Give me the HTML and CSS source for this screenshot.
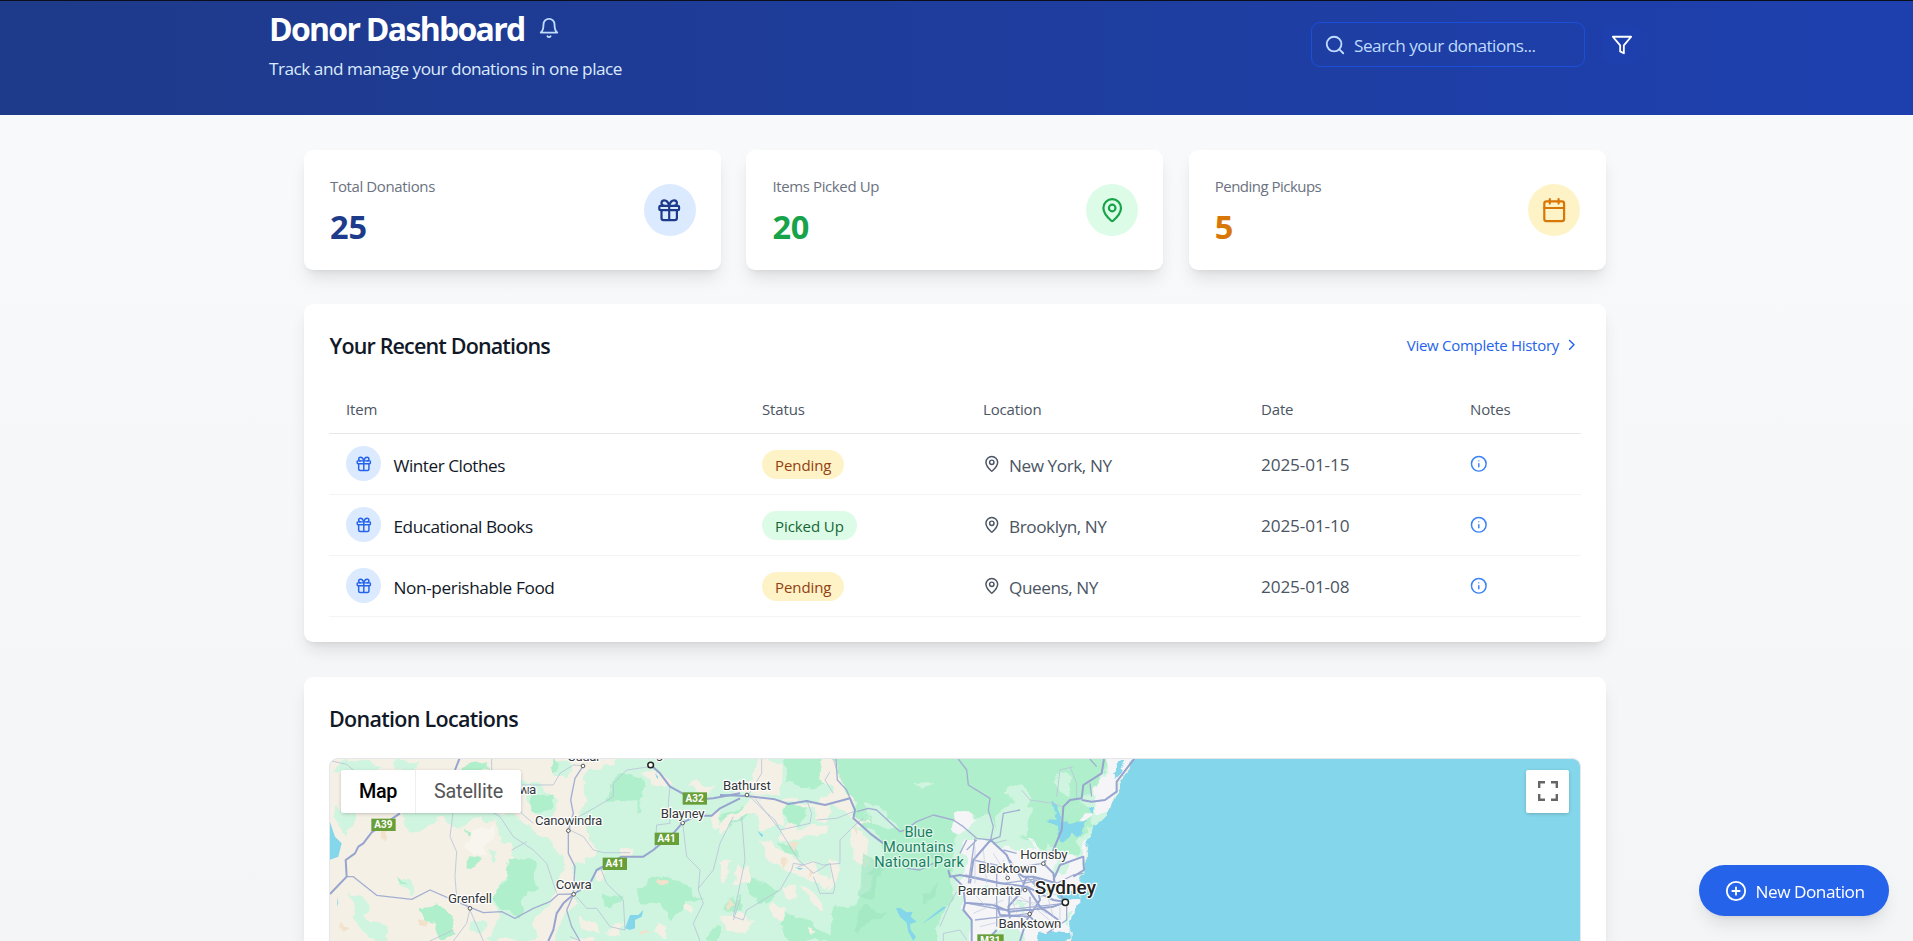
FILE: index.html
```html
<!DOCTYPE html>
<html lang="en">
<head>
<meta charset="utf-8">
<title>Donor Dashboard</title>
<link rel="stylesheet" href="styles.css">
</head>
<body>
<svg width="0" height="0" class="sprite" aria-hidden="true">
  <symbol id="gift" viewBox="0 0 24 24"><rect x="3" y="8" width="18" height="4" rx="1"/><path d="M12 8v13M19 12v7a2 2 0 0 1-2 2H7a2 2 0 0 1-2-2v-7M7.5 8a2.5 2.5 0 0 1 0-5A4.8 8 0 0 1 12 8a4.8 8 0 0 1 4.5-5 2.5 2.5 0 0 1 0 5"/></symbol>
  <symbol id="pin" viewBox="0 0 24 24"><path d="M20 10c0 4.993-5.539 10.193-7.399 11.799a1 1 0 0 1-1.202 0C9.539 20.193 4 14.993 4 10a8 8 0 0 1 16 0"/><circle cx="12" cy="10" r="3"/></symbol>
  <symbol id="info" viewBox="0 0 24 24"><circle cx="12" cy="12" r="10"/><path d="M12 16v-4M12 8h.01"/></symbol>
</svg>

<header class="header">
  <div class="header-inner">
    <div class="heading">
      <div class="title-row">
        <h1 class="title">Donor Dashboard</h1>
        <svg class="icon icon-md bell" viewBox="0 0 24 24"><path d="M6 8a6 6 0 0 1 12 0c0 7 3 9 3 9H3s3-2 3-9M10.3 21a1.94 1.94 0 0 0 3.4 0"/></svg>
      </div>
      <p class="subtitle">Track and manage your donations in one place</p>
    </div>
    <div class="tools">
      <div class="search">
        <svg class="icon icon-md" viewBox="0 0 24 24"><circle cx="11" cy="11" r="8"/><path d="m21 21-4.3-4.3"/></svg>
        <span class="search-text">Search your donations...</span>
      </div>
      <button class="filter"><svg class="icon icon-md" viewBox="0 0 24 24"><path d="M22 3H2l8 9.46V19l4 2v-8.54z"/></svg></button>
    </div>
  </div>
</header>

<main class="main">
  <section class="stats">
    <div class="card stat">
      <div><p class="stat-label">Total Donations</p><p class="stat-value blue">25</p></div>
      <div class="bubble bubble-blue"><svg class="icon icon-lg"><use href="#gift"/></svg></div>
    </div>
    <div class="card stat">
      <div><p class="stat-label">Items Picked Up</p><p class="stat-value green">20</p></div>
      <div class="bubble bubble-green"><svg class="icon icon-lg"><use href="#pin"/></svg></div>
    </div>
    <div class="card stat">
      <div><p class="stat-label tight">Pending Pickups</p><p class="stat-value amber">5</p></div>
      <div class="bubble bubble-amber"><svg class="icon icon-lg" viewBox="0 0 24 24"><path d="M8 2v4M16 2v4M3 10h18"/><rect x="3" y="4" width="18" height="18" rx="2"/></svg></div>
    </div>
  </section>

  <section class="card recent">
    <div class="recent-head">
      <h2 class="section-title recent-title">Your Recent Donations</h2>
      <a class="history"><span>View Complete History</span><svg class="icon icon-sm" viewBox="0 0 24 24"><path d="m9 18 6-6-6-6"/></svg></a>
    </div>
    <table class="table">
      <thead><tr><th class="c-item">Item</th><th class="c-status">Status</th><th class="c-loc">Location</th><th class="c-date">Date</th><th>Notes</th></tr></thead>
      <tbody>
        <tr>
          <td><div class="cell"><span class="dot"><svg class="icon icon-sm"><use href="#gift"/></svg></span><span class="name">Winter Clothes</span></div></td>
          <td><span class="badge pending">Pending</span></td>
          <td><div class="cell place"><svg class="icon icon-sm"><use href="#pin"/></svg><span>New York, NY</span></div></td>
          <td class="date">2025-01-15</td>
          <td><svg class="icon icon-sm note"><use href="#info"/></svg></td>
        </tr>
        <tr>
          <td><div class="cell"><span class="dot"><svg class="icon icon-sm"><use href="#gift"/></svg></span><span class="name">Educational Books</span></div></td>
          <td><span class="badge picked">Picked Up</span></td>
          <td><div class="cell place"><svg class="icon icon-sm"><use href="#pin"/></svg><span>Brooklyn, NY</span></div></td>
          <td class="date">2025-01-10</td>
          <td><svg class="icon icon-sm note"><use href="#info"/></svg></td>
        </tr>
        <tr>
          <td><div class="cell"><span class="dot"><svg class="icon icon-sm"><use href="#gift"/></svg></span><span class="name wide">Non-perishable Food</span></div></td>
          <td><span class="badge pending">Pending</span></td>
          <td><div class="cell place"><svg class="icon icon-sm"><use href="#pin"/></svg><span>Queens, NY</span></div></td>
          <td class="date">2025-01-08</td>
          <td><svg class="icon icon-sm note"><use href="#info"/></svg></td>
        </tr>
      </tbody>
    </table>
  </section>

  <section class="card locations">
    <h2 class="section-title">Donation Locations</h2>
    <div class="map">
      <svg class="map-canvas" viewBox="330 759 1250 182" preserveAspectRatio="none">
        <defs>
          <filter id="rough" x="0" y="0" width="1" height="1"><feTurbulence type="fractalNoise" baseFrequency=".06" numOctaves="3" seed="4"/><feDisplacementMap in="SourceGraphic" scale="14" xChannelSelector="R" yChannelSelector="G"/></filter>
        </defs>
        <rect x="330" y="758" width="1250" height="183" fill="#f5f0e5"/>
        <!-- western plains -->
        <g filter="url(#rough)">
        <g transform="translate(320 670) scale(.33333)">
          <rect x="-100" y="150" width="1500" height="800" fill="#f5f0e5"/>
          <g fill="#cff5e0">
            <path d="M810 300 880 290 905 250H1300V900H830L800 700 770 690 790 570 830 540 800 470 770 440 800 390 790 340Z"/>
            <path d="M520 430 600 440 640 480 700 520 740 600 690 700 640 760 650 813 500 813 540 740 520 690 560 600 590 560 540 500Z"/>
            <path d="M760 570 830 600 860 813H700L720 740 780 700Z"/>
            <path d="M250 430 330 410H520L580 480 520 450 480 440 420 480 360 440 300 490 270 480Z"/>
            <path d="M70 270 190 285 160 305H50Z"/><path d="M90 665 150 700 130 740 200 780 190 830 150 813 95 720Z"/>
            <path d="M600 330 660 340 720 400 700 450 660 440 620 400Z"/><path d="M230 270 300 280 280 300 225 300ZM60 400 100 440 80 500 40 440Z"/>
            <path d="M460 740 500 760 480 800 450 780ZM240 625 275 640 270 670 235 650ZM510 540 530 550 525 570 510 560ZM545 500 560 510 550 520ZM710 280 760 270 740 330 700 320Z"/>
          </g>
          <g fill="#f5f0e5"><path d="M1230 540 1270 560V760L1235 750 1210 700 1240 660 1205 620 1240 590ZM780 740 830 760 840 790 790 780ZM1120 330 1180 350 1160 370 1110 350ZM905 540 940 535 945 560 905 565ZM1090 690 1115 710 1105 740 1085 715ZM1000 760 1030 770 1040 800 1000 790ZM1175 440 1200 430 1210 460 1180 470ZM820 610 860 615 850 640 820 630ZM960 300 1040 310 1060 350 1000 340ZM890 755 915 760 900 800 860 790Z"/></g>
          <g fill="#b0efcb">
            <path d="M570 560 650 570 650 660 610 690 590 740 540 720 525 680 550 640Z"/><path d="M305 710 350 700 400 740 410 800 360 805 340 760 310 740Z"/>
            <path d="M900 310 970 330 960 390 870 395 880 340Z"/><path d="M635 365 700 365 700 420 650 430 625 400Z"/><path d="M440 565 478 570 465 600 440 595Z"/>
            <path d="M950 655 1000 620 1050 610 1100 650 1150 690 1100 690 1060 750 1020 700 960 690Z"/><path d="M420 290 500 270 500 300 460 320 430 310Z"/>
            <path d="M440 475 465 495 440 497ZM235 615 262 650 240 645ZM690 265 720 290 700 310ZM955 370 965 430 955 430ZM860 670 900 690 880 720 850 700ZM1180 770 1210 790 1190 810 1150 800Z"/>
          </g>
          <path fill="#f8f5ef" d="M460 480 520 460 520 510 495 520 495 560 450 560 440 530Z"/>
          <path fill="#f3e2cb" d="M175 485 200 480 200 500 178 500ZM300 740 320 745 315 770 300 765ZM1020 620 1045 625 1040 645 1020 640ZM60 765 85 770 75 790ZM960 775 990 785 965 795Z"/>
        </g>
        <!-- mountains and basin -->
        <g transform="translate(720 740) scale(.33333)">
          <path fill="#cff5e0" d="M0 0H1260L1200 130 1150 260 1105 330 1080 480 1040 640H0Z"/>
          <g fill="#b0efcb">
            <path d="M190 30H440L430 150 400 180 340 90 330 110 290 150 200 130ZM360 30H1160L1140 130 1080 180 1020 240 1000 330 900 290 860 310 820 270 800 230 760 220 700 250 700 330 690 420 700 470 650 560 660 640H320L340 500 420 440 460 390 490 330 480 290 410 230 400 180 380 150 350 90Z"/>
            <path d="M1020 240 1080 180 1110 200 1120 260 1070 300 1080 330 1010 370 990 320ZM195 205 250 190 270 230 230 260 195 250ZM60 400 110 410 170 450 150 500 100 470ZM200 520 290 560 340 600 200 600 180 550ZM0 230 60 190 100 210 40 260ZM20 480 70 470 60 520 20 510ZM180 300 230 320 240 350 190 340Z"/>
          </g>
          <g fill="#cff5e0"><path d="M430 190 500 220 540 270 480 260 440 230ZM820 230 870 180 930 200 920 280 860 310 820 280ZM850 150 900 130 940 170 900 200ZM580 130 650 130 600 150ZM340 430 400 430 420 400 470 410 400 500 350 500ZM1020 90 1060 120 1050 170 1000 130ZM1010 380 1080 360 1085 410 1040 420Z"/></g>
          <g fill="#f5f0e5">
            <path d="M120 50 190 60 180 160 120 170 40 160 100 110ZM310 50 350 60 380 150 400 180 400 230 330 190 320 240 290 240 280 200 200 190 180 260 120 270 100 210 60 230 0 290V250L60 200 100 170 300 190 340 140 300 120Z"/>
            <path d="M390 270 430 270 440 310 450 370 430 390 405 370 395 310ZM190 240 230 270 330 250 310 280 240 300 180 290ZM120 300 180 330 240 370 280 370 330 420 310 440 250 400 190 390 140 350ZM50 370 90 380 90 430 40 440ZM0 360 30 360 20 430 0 430ZM0 530 60 520 100 540 80 580 20 570ZM250 440 300 470 310 510 270 500ZM160 490 200 500 190 540 160 530ZM330 360 360 370 350 430 320 450ZM255 560 290 570 270 585ZM390 230 450 240 420 260ZM180 440 230 440 230 470 190 465Z"/>
          </g>
          <path fill="#f3e2cb" d="M210 300 240 310 225 340ZM20 480 45 485 30 510ZM180 360 210 370 190 390ZM400 260 415 265 405 290ZM260 380 280 385 270 405Z"/>
          <g fill="#9fe5bf" opacity=".6"><path d="M430 330 500 380 450 480 410 470ZM600 320 680 330 670 370 620 360ZM420 500 510 520 400 580ZM610 460 660 430 620 500Z"/></g>
          <g fill="#f5f5f7">
            <path d="M695 265 715 225 745 210 770 230 745 260 705 295ZM740 300H800L820 315 900 335 950 320 920 290 950 305 970 330 1000 340 1090 345 1085 410 1075 470 1085 500 1060 560 1040 640H760L750 540 730 510 735 480 700 430 725 410 740 360 720 340Z"/>
            <path d="M1160 40H1250L1200 120 1185 165 1170 220H1120L1130 185 1110 150 1150 110ZM1090 220H1115L1105 250 1090 245ZM1100 290 1112 300 1095 360 1080 350Z"/>
          </g>
          <g fill="#cff5e0"><path d="M800 580 900 570 920 640H800ZM1000 370 1050 370 1040 400 1000 410ZM880 480 920 490 910 510ZM780 440 810 450 800 470ZM960 440 980 430 980 460ZM1040 520 1060 530 1050 560ZM690 480 735 510 755 600 650 620 660 560Z"/></g>
          <path fill="#84d6ea" d="M1246 30 1210 130 1190 160 1172 215 1155 245 1120 260 1115 280 1098 300 1110 330 1096 375 1085 420 1078 475 1078 500 1065 540 1050 580 1058 640H2650V30ZM1170 100 1200 70 1225 65 1185 120ZM1100 190 1120 195 1110 225ZM998 185 1012 190 1015 250 1055 255 1110 245 1080 290 1060 270 1025 310 1010 290 1000 260 980 235 1003 240ZM1020 455 1075 445 1075 480 1040 490 1015 475ZM970 575 1055 580V610H960Z"/>
        </g>
        </g>
        <!-- roads, west -->
        <g class="roads" transform="translate(320 670) scale(.33333)">
          <path class="minor" d="M30 272 80 283 100 300M515 262V300M600 300 590 390 605 430 640 460M470 400 540 440 580 500 640 540 680 580 700 640 710 670M575 540 620 515M605 345H700L720 310 760 285 788 287M400 420 390 500 410 545 405 620 410 680 450 714M750 480 790 500 820 540 850 548H930M840 590 860 640 910 690 915 780 870 770 830 715 800 715 770 680M450 716 440 760 400 813M450 720 490 813M750 800 780 813M1088 460 1100 560 1140 600 1135 660 1150 700 1120 760 1140 813M1135 655 1180 600 1200 520 1240 440M1050 350 1045 400 1050 460 1010 465 1005 540M990 290 920 300 880 340 880 380 830 410 750 455V480M1240 750 1260 690M330 813 400 780"/>
          <path class="mid" d="M80 620 100 620 170 676 275 688 330 660 450 712 490 728 545 725 585 745 640 715 690 695 715 673 760 672M745 482V550L765 590 760 670M788 290 765 325 752 390 760 430 745 480M760 675 740 720 755 770 780 813"/>
          <path class="major" d="M30 672 80 620 77 570 105 550 115 530 130 520 155 487 240 430M405 300 420 262M992 284 1020 310 1050 350 1090 372 1120 390 1180 385 1260 370M1088 458 1060 490 1000 540 970 560H905L830 600 810 640 762 672 730 700 710 730 700 780 685 813M1088 458 1130 437H1175L1200 415 1260 385"/>
        </g>
        <!-- roads, east -->
        <g class="roads" transform="translate(720 740) scale(.33333)">
          <path class="minor" d="M125 57V100L85 165 130 210 165 240 180 270 235 360 280 400 330 370 345 440 340 460 300 460 280 410M105 175 180 270 270 250 275 220 260 180M65 230 75 360 40 530 70 540 80 510 180 450 215 390 220 370 250 375M235 380 280 365 310 375 360 370 360 300 410 250 430 235M290 240 350 235 400 215M340 57 350 90M330 95 315 120 340 160M1010 170 1020 90 1060 80M905 150 930 180 1000 190 1025 200M1050 80 1070 130 1070 180M860 300 820 310M670 603 670 580 720 570 740 600M710 455 690 490 660 560"/>
          <path class="mid" d="M348 57 352 120 380 150 390 175M715 57 740 90 745 135 810 175 805 210 820 260 812 300M410 215 445 205 470 210 540 275 555 270 590 245 640 225 700 240 730 260 770 295 812 300M560 385 600 390 640 370M740 300 720 340M765 295 745 430M770 300 740 330M812 300 840 290 850 220 900 210M1110 57 1130 80M1110 130 1115 170M745 490 850 510 900 505 1035 490M765 540 850 530 930 520M735 405 850 430 960 415 1010 430M830 400V560M760 360 850 380M870 360 910 430 960 420M900 380 970 370M870 445 865 520M930 520 930 470M920 410 960 450 1000 450M1040 490 1040 540 980 580M890 340 850 330M940 410 945 440M1010 430 1060 405 1090 400"/>
          <path class="major" d="M0 165 80 168 165 178 205 192 260 183 315 195 390 175 405 210 400 235 450 280 490 310M812 300 760 360 750 430M812 300 860 345 880 390 910 410 940 410 1010 430M685 390 690 410 720 405 840 430 920 440 1000 480 1040 487M700 410 730 440 735 490 730 510 755 540 755 603M735 488 820 495 870 515 1000 500 1036 487M830 495 840 525 930 530 960 560M830 570 800 603M1152 57 1145 100 1090 135 1085 175 1050 180 1030 200 1025 270 1000 330 970 370 1000 400 1005 440 1036 487M1242 57 1190 125 1190 155 1155 180 1115 185 1085 180M1000 420 1020 375 1090 350 1092 390 1060 410M920 410 900 460 865 500 870 535M950 430 960 480 920 540 900 603M920 440 960 500 1015 540"/>
          <path class="thin" d="M765 320V430M790 330 800 430M780 460 830 450M760 520 850 480M780 560 860 540M850 360 860 410M870 460 890 520M900 470 980 520M940 500 1000 550M960 470 1030 460M980 460 1000 530M1020 500V560M1040 440 1060 470M880 550 960 545M890 480 950 490M820 340 845 380M740 440 800 500"/>
        </g>
        <g fill="#84d6ea" transform="translate(320 670) scale(.33333)"><path d="M28 450 45 500 65 520 55 560 28 570ZM915 775 930 735 955 735 970 720 965 740 945 750 945 775 930 780ZM1005 310 1015 320 1012 328ZM52 680 55 700 52 710Z"/></g>
        <g fill="#84d6ea" transform="translate(720 740) scale(.33333)"><path d="M528 505 540 503 560 517 578 515 572 530 590 545 570 552 572 570 588 590 580 603 565 575 560 548 540 530ZM605 552 650 515 670 500 680 502 640 530ZM112 272 130 285 125 292ZM225 382 250 385 240 390Z"/></g>
        <!-- labels -->
        <g class="labels" transform="translate(320 670) scale(.33333)">
          <rect class="shield" x="154" y="446" width="73" height="37"/><rect class="shield" x="1088" y="367" width="73" height="37"/><rect class="shield" x="1004" y="488" width="73" height="37"/><rect class="shield" x="848" y="563" width="73" height="37"/>
          <text class="code" x="190" y="475">A39</text><text class="code" x="1124" y="396">A32</text><text class="code" x="1040" y="517">A41</text><text class="code" x="884" y="592">A41</text>
          <circle cx="789" cy="288" r="5.5"/><circle cx="745" cy="482" r="5.5"/><circle cx="1088" cy="459" r="5.5"/><circle cx="761" cy="673" r="5.5"/><circle cx="450" cy="715" r="5.5"/><circle class="city" cx="992" cy="285" r="8.5"/>
          <text x="790" y="273" textLength="96">Cudal</text><text x="992" y="265" textLength="110">Orange</text><text x="604" y="371" textLength="90">Gowra</text>
          <text x="746" y="466" textLength="202">Canowindra</text><text x="1088" y="444" textLength="132">Blayney</text><text x="761" y="657" textLength="108">Cowra</text><text x="450" y="699" textLength="132">Grenfell</text>
        </g>
        <g class="labels" transform="translate(720 740) scale(.33333)">
          <circle cx="81" cy="165" r="5.5"/><circle cx="970" cy="371" r="5.5"/><circle cx="863" cy="414" r="5.5"/><circle cx="915" cy="450" r="5.5"/><circle cx="929" cy="522" r="5.5"/><circle class="city" cx="1036" cy="487" r="9.5"/>
          <text x="81" y="150" textLength="144">Bathurst</text><text x="972" y="356" textLength="142">Hornsby</text><text x="863" y="399" textLength="176">Blacktown</text><text x="808" y="464" textLength="190">Parramatta</text><text x="930" y="565" textLength="189">Bankstown</text>
          <text class="sydney" x="1036" y="463" textLength="184">Sydney</text>
          <text class="park" x="596" y="290" textLength="85">Blue</text><text class="park" x="595" y="335" textLength="212">Mountains</text><text class="park" x="597" y="381" textLength="269">National Park</text>
          <rect class="shield" x="772" y="583" width="79" height="37"/><text class="code" x="811" y="611">M31</text>
        </g>
      </svg>
      <div class="map-types"><span class="on">Map</span><span class="off">Satellite</span></div>
      <div class="map-full"><svg width="20" height="20" viewBox="0 0 20 20"><path d="M1.2 7V1.2H7M13 1.2h5.8V7M18.8 13v5.8H13M7 18.8H1.2V13"/></svg></div>
    </div>
  </section>
</main>

<button class="fab"><svg class="icon icon-md" viewBox="0 0 24 24"><circle cx="12" cy="12" r="10"/><path d="M8 12h8M12 8v8"/></svg><span>New Donation</span></button>
</body>
</html>
```
FILE: styles.css
```css
* { box-sizing: border-box; margin: 0; padding: 0; }
html, body { height: 941px; overflow: hidden; }
body { font-family: "Open Sans", sans-serif; font-size: 17.2px; line-height: 26.4px; letter-spacing: -.47px; color: #111827; background: linear-gradient(#f9fafb, #f3f4f6 1100px); }
.sprite { position: absolute; }
button { border: 0; font: inherit; letter-spacing: inherit; }
.icon { fill: none; stroke: currentColor; stroke-width: 2; stroke-linecap: round; stroke-linejoin: round; flex: none; }
.icon-sm { width: 17.6px; height: 17.6px; }
.icon-md { width: 22px; height: 22px; }
.icon-lg { width: 26.4px; height: 26.4px; }
.header { height: 115px; border-top: 1px solid #0b0f19; background: linear-gradient(90deg, #1e3a8a, #1e40af); color: #fff; }
.header-inner { width: 1372px; margin-left: 269px; display: flex; justify-content: space-between; }
.heading { padding-top: 7px; }
.title-row { display: flex; gap: 13px; }
.title { font-size: 32px; line-height: 42px; font-weight: 700; letter-spacing: -1.72px; }
.bell { margin-top: 9px; color: #bfdbfe; }
.subtitle { margin-top: 6px; letter-spacing: -.487px; color: #dbeafe; }
.tools { display: flex; gap: 17px; padding-top: 21px; }
.search { width: 274px; height: 45px; border: 1px solid #1d4ed8; border-radius: 9px; display: flex; align-items: center; gap: 8px; padding-left: 12px; color: #bfdbfe; }
.search-text { padding-top: 3px; letter-spacing: -.52px; }
.filter { width: 39px; height: 39px; margin-top: 3px; border-radius: 9px; background: #1e40af; color: #fff; display: grid; place-items: center; }
.main { width: 1302px; margin: 35px 0 0 304px; }
.card { background: #fff; border-radius: 9px; box-shadow: 0 11px 16.5px -3.3px rgba(0,0,0,.1), 0 4.4px 6.6px -4.4px rgba(0,0,0,.1); }
.stats { display: grid; grid-template-columns: 417px 417px 417px; column-gap: 25.4px; }
.stat { height: 120px; padding: 25px 25.4px 0 26px; display: flex; justify-content: space-between; }
.stat-label { font-size: 15px; line-height: 22px; letter-spacing: -.38px; color: #6b7280; }
.tight { letter-spacing: -.52px; }
.stat-value { font-size: 32.5px; line-height: 40px; font-weight: 700; letter-spacing: -.1px; margin-top: 10px; }
.blue { color: #1e3a8a; } .green { color: #16a34a; } .amber { color: #d97706; }
.bubble { width: 52px; height: 52px; border-radius: 50%; margin-top: 9px; display: grid; place-items: center; }
.bubble-blue { background: #dbeafe; color: #1e3a8a; }
.bubble-green { background: #dcfce7; color: #16a34a; }
.bubble-amber { background: #fef3c7; color: #d97706; }
.recent { height: 338px; margin-top: 34px; padding: 26px 25px 0; }
.recent-head { display: flex; justify-content: space-between; height: 61px; }
.section-title { font-size: 21.5px; line-height: 31px; font-weight: 600; letter-spacing: -.7px; }
.recent-title { letter-spacing: -.84px; padding-left: .5px; }
.history { display: flex; align-items: center; gap: 4.4px; height: 29px; font-size: 15px; letter-spacing: -.28px; color: #2563eb; }
.history span { padding-top: 2px; }
.table { width: 1252px; table-layout: fixed; border-collapse: collapse; }
th { height: 42px; padding: 0 0 6px 17px; text-align: left; font-size: 15px; font-weight: 500; letter-spacing: -.15px; color: #4b5563; border-bottom: 1px solid #e5e7eb; }
td { height: 61px; padding: 0 0 0 17px; border-bottom: 1px solid #f3f4f6; }
.c-item { width: 416px; } .c-status { width: 221px; } .c-loc { width: 278px; } .c-date { width: 209px; }
.cell { display: flex; align-items: center; }
.cell > span:last-child { padding-top: 4px; margin-bottom: -1px; }
.wide { letter-spacing: -.38px; }
.dot { width: 35px; height: 35px; border-radius: 50%; background: #dbeafe; color: #2563eb; display: grid; place-items: center; margin-right: 12.5px; }
.badge { display: block; width: fit-content; height: 29px; line-height: 30px; margin-top: 2px; border-radius: 15px; padding: 0 13px; font-size: 15px; font-weight: 500; letter-spacing: -.08px; }
.pending { background: #fef3c7; color: #92400e; }
.picked { background: #dcfce7; color: #166534; }
.place, .date { color: #4b5563; }
.place { gap: 8.8px; letter-spacing: -.44px; }
.place .icon, .note { margin-left: -.4px; }
.date { padding-top: 3px; letter-spacing: -.13px; }
.note { color: #3b82f6; display: block; }
.locations { height: 264px; margin-top: 35px; padding: 26px 25px 0; border-radius: 9px 9px 0 0; }
.map { position: relative; height: 183px; margin-top: 24px; border: 1px solid #e5e7eb; border-bottom: 0; border-radius: 9px 9px 0 0; overflow: hidden; background: #84d6ea; letter-spacing: 0; }
.map-canvas { display: block; width: 1250px; height: 182px; }
.roads path { fill: none; stroke: #97a4cf; stroke-linejoin: round; }
.roads .major { stroke-width: 6; }
.roads .mid { stroke: #a3afd2; stroke-width: 4; }
.roads .minor { stroke: #bac5da; stroke-width: 2.6; }
.roads .thin { stroke: #c3cadf; stroke-width: 2; }
.labels { font: 40px Roboto, sans-serif; text-anchor: middle; fill: #333739; }
.labels text { stroke: #fff; stroke-width: 7; stroke-linejoin: round; paint-order: stroke; }
.labels circle { fill: #fff; stroke: #555; stroke-width: 3; }
.labels .city { stroke: #222; stroke-width: 4.5; }
.labels .shield { fill: #689f38; }
.labels .code { font-size: 30px; font-weight: 700; fill: #fff; stroke: none; }
.labels .park { font-size: 44px; fill: #188060; stroke: #e0f8ec; }
.labels .sydney { font-size: 57px; font-weight: 500; fill: #222; }
.map-types { position: absolute; left: 11px; top: 11px; width: 180px; height: 43px; display: flex; background: #fff; border-radius: 2px; box-shadow: 0 1px 4px -1px rgba(0,0,0,.3); font: 19.8px/43px Roboto, sans-serif; letter-spacing: -.2px; }
.on { width: 75px; padding-left: 18px; font-weight: 500; letter-spacing: -.35px; color: #000; border-right: 1px solid #eee; }
.off { padding-left: 18px; color: #565656; }
.map-full { position: absolute; right: 11px; top: 11px; width: 43px; height: 43px; background: #fff; border-radius: 2px; box-shadow: 0 1px 4px -1px rgba(0,0,0,.3); display: grid; place-items: center; }
.map-full svg { margin-top: -1px; }
.map-full path { fill: none; stroke: #666; stroke-width: 2.4; }
.fab { position: fixed; left: 1699px; top: 865px; width: 190px; height: 51px; border-radius: 26px; background: #2563eb; color: #fff; display: flex; align-items: center; gap: 9px; padding-left: 25.5px; font-size: 17.2px; box-shadow: 0 11px 16.5px -3.3px rgba(0,0,0,.1), 0 4.4px 6.6px -4.4px rgba(0,0,0,.1); }
.fab span { padding-top: 3px; }
```
